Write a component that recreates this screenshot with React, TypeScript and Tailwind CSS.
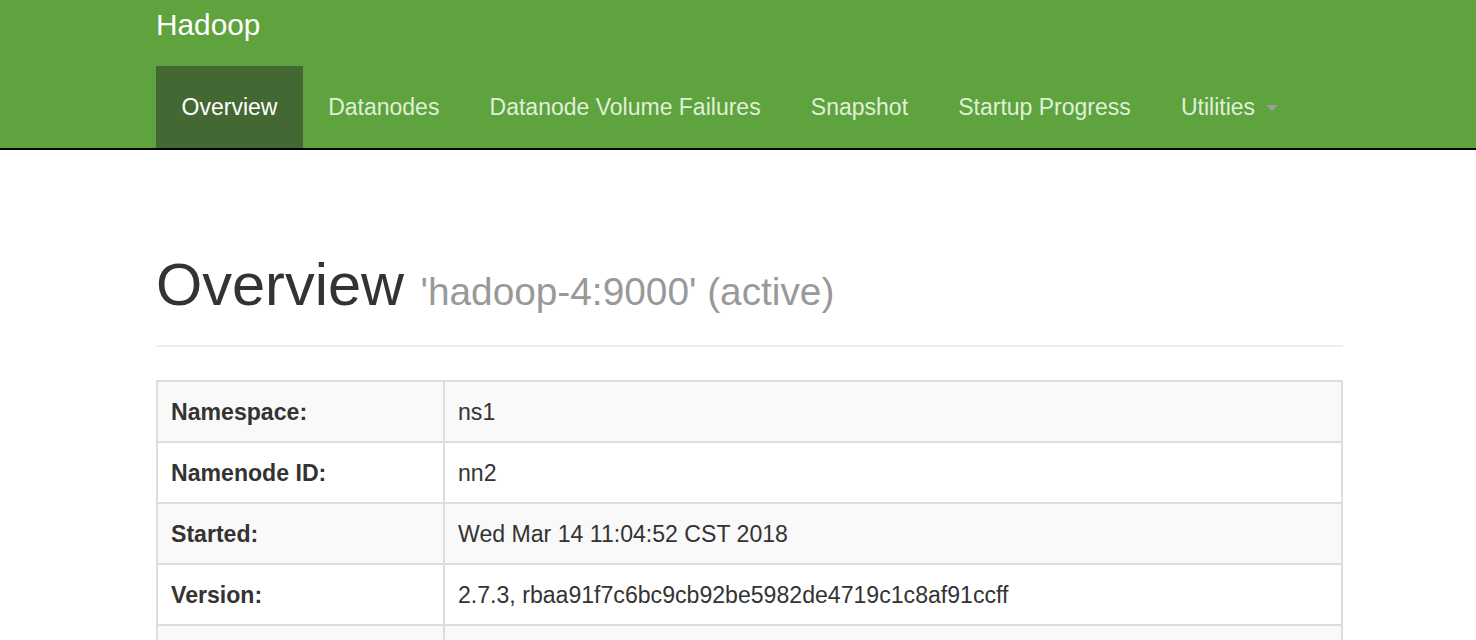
import React from "react";

const rows: [string, string][] = [
  ["Namespace:", "ns1"],
  ["Namenode ID:", "nn2"],
  ["Started:", "Wed Mar 14 11:04:52 CST 2018"],
  ["Version:", "2.7.3, rbaa91f7c6bc9cb92be5982de4719c1c8af91ccff"],
  ["Compiled:", "2016-08-18T01:41Z by root from branch-2.7.3"],
  ["Cluster ID:", "CID-1a2b3c4d-5e6f-7a8b-9c0d-1e2f3a4b5c6d"],
  ["Block Pool ID:", "BP-123456789-192.168.1.4-1521000000000"],
];

const navItems = ["Overview", "Datanodes", "Datanode Volume Failures", "Snapshot", "Startup Progress"];

export default function App() {
  return (
    <div className="min-h-[640px] bg-white text-[#333]" style={{ fontFamily: '"Liberation Sans", Arial, sans-serif' }}>
      <div className="bg-[#5fa33e] border-b-2 border-black">
        <div className="ml-[156px] w-[1187px]">
          <div className="h-[66px] pt-[8px]">
            <span className="block text-[29.8px] leading-[33px] text-white">Hadoop</span>
          </div>
          <ul className="flex h-[82px]">
            {navItems.map((item, i) => (
              <li
                key={item}
                className={
                  "flex items-center text-[23px] " +
                  (i === 0 ? "px-[25.6px] bg-[#436834] text-white" : "px-[25.1px] text-[#dff0d8]")
                }
              >
                {item}
              </li>
            ))}
            <li className="flex items-center px-[25.1px] text-[23px] text-[#dff0d8]">
              Utilities
              <span className="ml-[11px] mt-[2px] inline-block w-0 h-0 border-l-[6.5px] border-r-[6.5px] border-t-[6.5px] border-l-transparent border-r-transparent border-t-[#9d9d9d]" />
            </li>
          </ul>
        </div>
      </div>

      <div className="ml-[156px] w-[1187px]">
        <div className="pt-[102px] pb-[21px] border-b-[2px] border-[#eee] mb-[33px]">
          <h1 className="text-[59.5px] leading-[65px] font-normal whitespace-nowrap">
            Overview <span className="text-[38.8px] text-[#999]">'hadoop-4:9000' (active)</span>
          </h1>
        </div>

        <table className="w-full border-collapse border-2 border-[#ddd] text-[23.1px]">
          <tbody>
            {rows.map(([k, v], i) => (
              <tr key={k} className={i % 2 === 0 ? "bg-[#f9f9f9]" : "bg-white"}>
                <th className="w-[287px] border-2 border-[#ddd] px-[13px] pt-[14px] pb-[12px] text-left font-bold leading-[33px]">
                  {k}
                </th>
                <td className="border-2 border-[#ddd] px-[13px] pt-[14px] pb-[12px] leading-[33px]">{v}</td>
              </tr>
            ))}
          </tbody>
        </table>
      </div>
    </div>
  );
}
